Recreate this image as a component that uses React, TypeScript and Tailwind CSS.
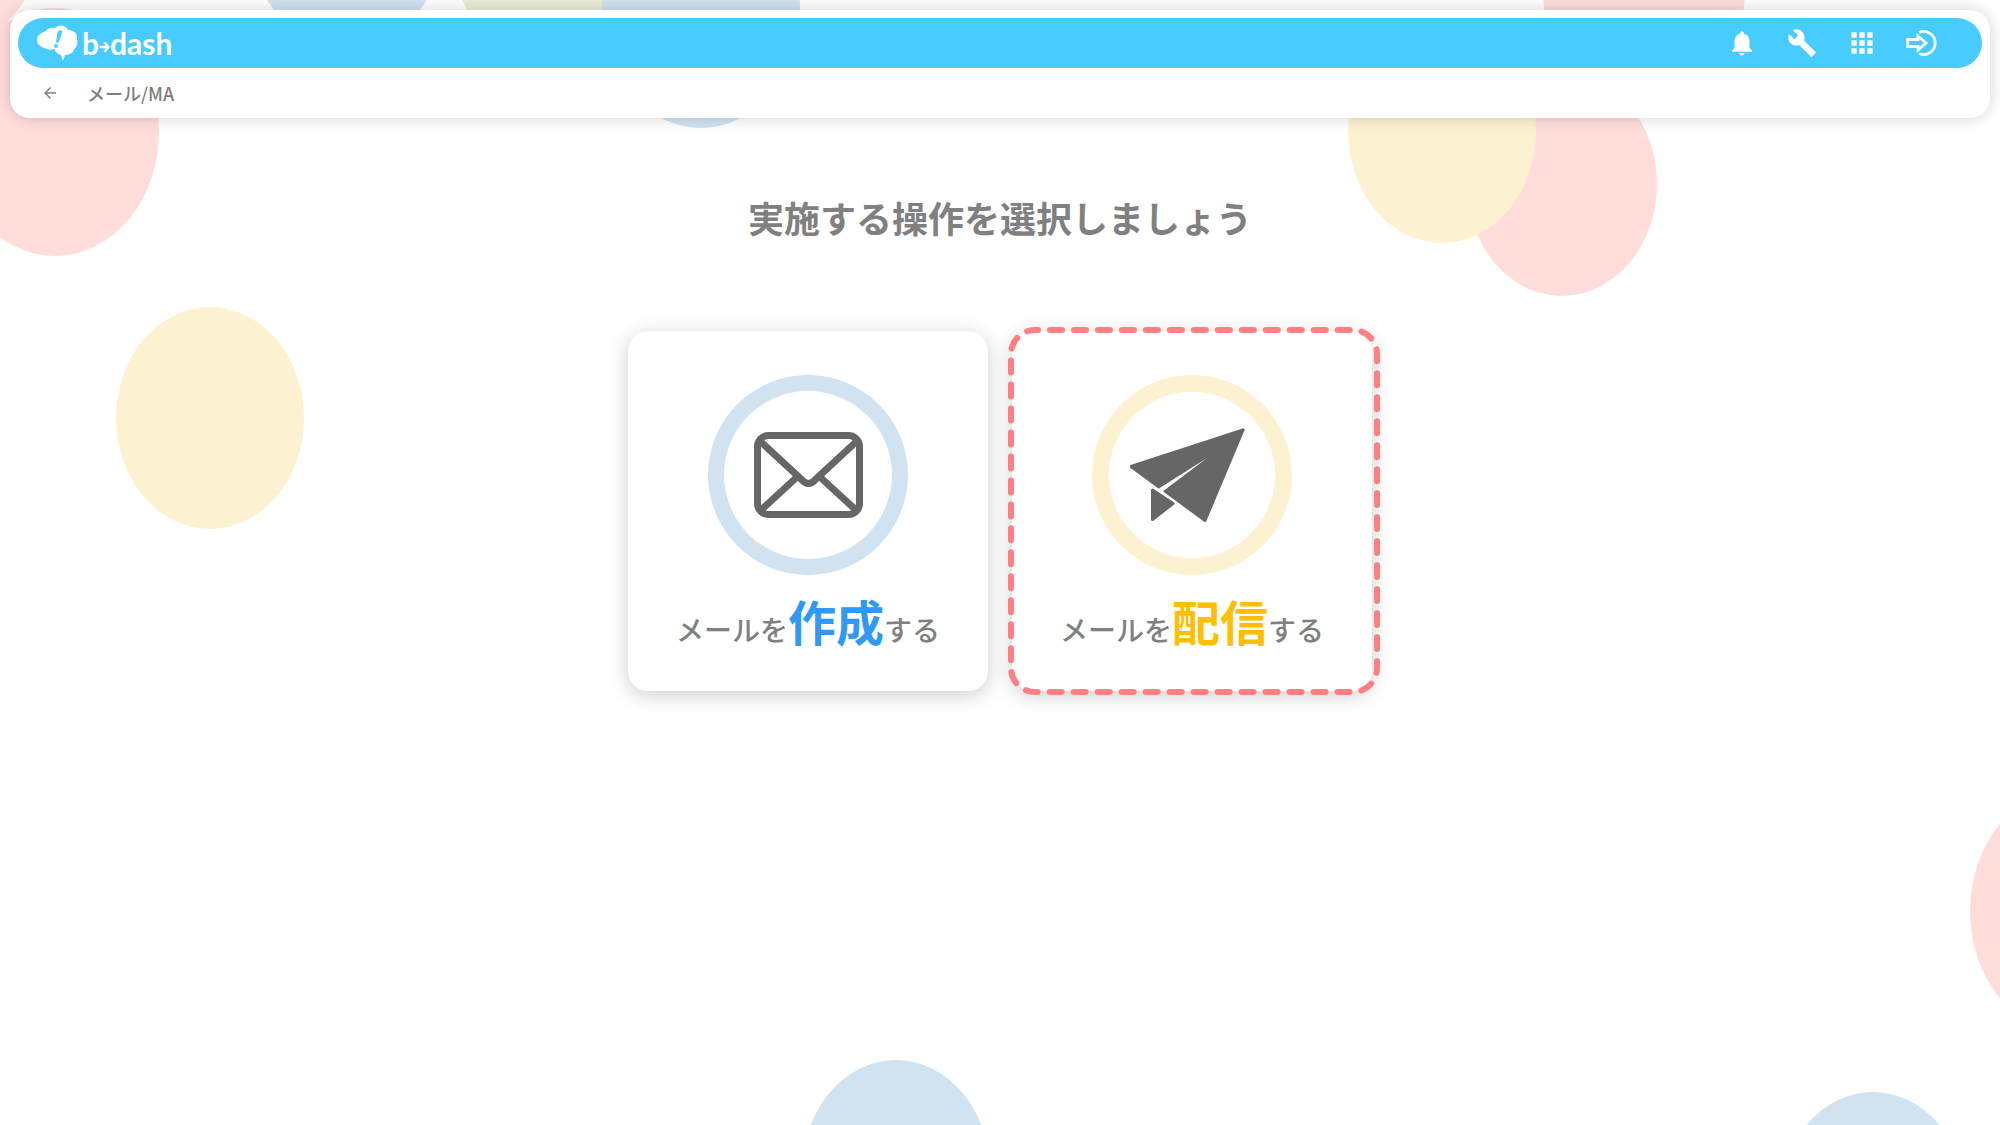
import type { ReactNode } from "react";
import { MdApps, MdArrowBack, MdBuild, MdNotifications } from "react-icons/md";
import clsx from "clsx";

// Balloons floating behind the page, placed by centre and radius.
const BALLOONS = [
  { cx: 347, cy: -71, rx: 100, ry: 118, fill: "#d1e2f0" },
  { cx: 545, cy: -65, rx: 100, ry: 118, fill: "#e9edd7" },
  { cx: 701, cy: 10, rx: 99, ry: 118, fill: "#d1e2f0" },
  { cx: -58, cy: -75, rx: 104, ry: 124, fill: "#ffdddb" },
  { cx: 55, cy: 132, rx: 104, ry: 124, fill: "#ffdddb" },
  { cx: 210, cy: 418, rx: 94, ry: 111, fill: "#fcf1d0" },
  { cx: 1644, cy: -10, rx: 101, ry: 120, fill: "#ffdddb" },
  { cx: 1562, cy: 184, rx: 95, ry: 112, fill: "#ffdddb" },
  { cx: 1442, cy: 131, rx: 94, ry: 112, fill: "#fcf1d0" },
  { cx: 2074, cy: 911, rx: 104, ry: 124, fill: "#ffdddb" },
  { cx: 896, cy: 1172, rx: 94, ry: 112, fill: "#d1e2f0" },
  { cx: 1873, cy: 1204, rx: 94, ry: 112, fill: "#d1e2f0" },
];

function Balloons() {
  return (
    <svg
      className="absolute inset-0 -z-10 h-full w-full"
      viewBox="0 0 2000 1125"
      preserveAspectRatio="xMidYMin slice"
      aria-hidden
    >
      {BALLOONS.map((b) => (
        <ellipse key={`${b.cx}-${b.cy}`} {...b} />
      ))}
    </svg>
  );
}

function Logo() {
  return (
    <span className="flex items-center text-white">
      <svg width="42" height="38" viewBox="0 0 42 38" aria-hidden>
        <path
          d="M1 16C1 12 4 9 8 8C12 4 16 3 19 4C23 0 30 1 32 6C38 6 42 10 41 15C42 19 41 23 38 25C38 29 32 31 29 31L27 37L25 31C21 30 19 28 19 25C15 26 11 26 9 24C4 23 1 20 1 16Z"
          fill="currentColor"
        />
        <path d="M21.500 8Q24 5.500 26.500 7.500L22.500 18.500H20Z" fill="#48cbff" />
        <circle cx="20" cy="22" r="2" fill="#48cbff" />
      </svg>
      <span className="ml-1 flex items-center font-[Lato,sans-serif] text-[30px] leading-9 font-bold">
        b
        <svg
          className="mt-2 shrink-0"
          width="11"
          height="12"
          viewBox="0 0 11 12"
          fill="none"
          stroke="currentColor"
          strokeWidth="2.500"
          strokeLinecap="round"
          strokeLinejoin="round"
          aria-hidden
        >
          <path d="M1.500 6H9M6 2L9.500 6L6 10" />
        </svg>
        dash
      </span>
    </span>
  );
}

function ExitIcon() {
  return (
    <svg width="32" height="28" viewBox="0 0 32 28" fill="none" stroke="#fff" aria-hidden>
      <path d="M13 3.500A11.500 11.500 0 1 1 13 24.500" strokeWidth="2.800" />
      <path d="M1.700 10.500H12V7L20 14L12 21V17.500H1.700Z" strokeWidth="2.800" />
    </svg>
  );
}

function MailIcon() {
  return (
    <svg
      width="110"
      height="86"
      viewBox="0 0 110 86"
      fill="none"
      stroke="#666"
      strokeWidth="7"
      aria-hidden
    >
      <rect x="4.500" y="3.500" width="102" height="79" rx="11" />
      <path d="M7 9L48 47Q55.500 56 63 47L104 9" />
      <path d="M7 79L44 45M104 79L67 45" />
    </svg>
  );
}

function PlaneIcon() {
  return (
    <svg
      width="124"
      height="94"
      viewBox="0 0 124 94"
      fill="#666"
      stroke="#666"
      strokeWidth="3"
      strokeLinejoin="round"
      aria-hidden
    >
      <path d="M1 38.500L113 2L77 30L29 59Z" />
      <path d="M113 2L75 92.500L35 63L79 30Z" />
      <path d="M22.500 62L43 75.500L22.500 91.500Z" />
      {/* fold between the two wings */}
      <path d="M29 60.500L77 30L34 62.500Z" fill="#fff" stroke="none" />
    </svg>
  );
}

interface ActionCardProps {
  icon: ReactNode;
  ring: string;
  accent: string;
  label: string;
  highlighted?: boolean;
}

function ActionCard({ icon, ring, accent, label, highlighted }: ActionCardProps) {
  return (
    <button
      type="button"
      className="relative flex h-90 w-90 flex-col items-center rounded-[20px] bg-white pt-11 shadow-[0_4px_20px_rgba(0,0,0,0.2)]"
    >
      <span className={clsx("grid h-50 w-50 place-items-center rounded-full", ring)}>{icon}</span>
      <span className="mt-[9px] text-[28px] font-medium leading-[72px] whitespace-nowrap">
        メールを<strong className={clsx("text-5xl leading-[72px] font-bold", accent)}>{label}</strong>する
      </span>
      {highlighted && (
        <svg className="absolute -top-1 -left-1 overflow-visible" width="372" height="368" aria-hidden>
          <rect
            x="3"
            y="3"
            width="366"
            height="362"
            rx="24"
            fill="none"
            stroke="#ff7f82"
            strokeWidth="6"
            strokeLinecap="round"
            strokeDasharray="12 11.98"
            strokeDashoffset="9"
          />
        </svg>
      )}
    </button>
  );
}

export default function App() {
  return (
    <div className="relative isolate min-h-screen overflow-hidden bg-white font-['Noto_Sans_CJK_JP',sans-serif] text-[#808080]">
      <Balloons />

      <header className="mx-[10px] mt-[10px] rounded-[20px] bg-white px-2 pt-2 shadow-[0_0_15px_rgba(0,0,0,0.18)]">
        <div className="flex h-[50px] items-center justify-between rounded-full bg-[#48cbff] pr-11 pl-[18px]">
          <a href="#home">
            <Logo />
          </a>
          <nav className="flex items-center gap-7 text-white">
            <button type="button" aria-label="お知らせ" className="grid h-8 w-8 place-items-center">
              <MdNotifications size={30} />
            </button>
            <button type="button" aria-label="設定" className="grid h-8 w-8 place-items-center">
              <MdBuild size={30} />
            </button>
            <button type="button" aria-label="アプリ一覧" className="grid h-8 w-8 place-items-center">
              <MdApps size={32} />
            </button>
            <button type="button" aria-label="ログアウト" className="grid h-8 w-8 place-items-center">
              <ExitIcon />
            </button>
          </nav>
        </div>
        <div className="flex h-[50px] items-center gap-7 pl-[23px]">
          <button type="button" aria-label="戻る">
            <MdArrowBack size={18} />
          </button>
          <span className="text-lg font-medium">メール/MA</span>
        </div>
      </header>

      <main className="flex flex-col items-center pt-[72px]">
        <h1 className="text-4xl leading-[54px] font-bold">実施する操作を選択しましょう</h1>
        <div className="mt-[87px] flex gap-6">
          <ActionCard
            icon={<MailIcon />}
            ring="border-[16px] border-[#d1e2f0]"
            accent="text-[#2f99f5]"
            label="作成"
          />
          <ActionCard
            icon={<PlaneIcon />}
            ring="border-[17px] border-[#fcf1d0]"
            accent="text-[#ffbf00]"
            label="配信"
            highlighted
          />
        </div>
      </main>
    </div>
  );
}
